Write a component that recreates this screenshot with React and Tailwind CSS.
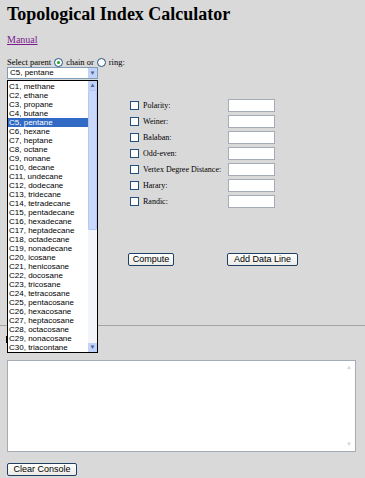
const alkanes = [
  'methane', 'ethane', 'propane', 'butane', 'pentane', 'hexane', 'heptane', 'octane', 'nonane', 'decane',
  'undecane', 'dodecane', 'tridecane', 'tetradecane', 'pentadecane', 'hexadecane', 'heptadecane', 'octadecane', 'nonadecane', 'icosane',
  'henicosane', 'docosane', 'tricosane', 'tetracosane', 'pentacosane', 'hexacosane', 'heptacosane', 'octacosane', 'nonacosane', 'triacontane'
];

const indices = ['Polarity:', 'Weiner:', 'Balaban:', 'Odd-even:', 'Vertex Degree Distance:', 'Harary:', 'Randic:'];

const sans = "font-['Liberation_Sans',Arial,sans-serif]";

const Button = ({ children, className }) => (
  <button
    className={`${sans} h-[13px] text-[9px] leading-none text-black bg-gradient-to-b from-white to-[#ecebe6] border border-[#1f3f64] rounded-[2px] ${className}`}
  >
    {children}
  </button>
);

const App = () => {
  return (
    <div className="relative w-full min-h-[478px] bg-[#d9d9d9] font-['Liberation_Serif','Times_New_Roman',serif] text-black">
      <div className="px-[7px] pt-[3px]">
        <h1 className="text-[18px] leading-[22px] font-bold">Topological Index Calculator</h1>
        <a href="#" className="block mt-[9px] w-fit text-[10px] leading-[11px] text-[#7b1a8e] underline">Manual</a>

        <div className="mt-[12px] flex items-center gap-[3px] text-[8.5px] leading-[10px]">
          <span>Select parent</span>
          <span className="w-[9px] h-[9px] rounded-full border border-[#1c5180] bg-white flex items-center justify-center">
            <span className="w-[3px] h-[3px] rounded-full bg-[#21a121]" />
          </span>
          <span>chain or</span>
          <span className="w-[9px] h-[9px] rounded-full border border-[#1c5180] bg-white" />
          <span>ring:</span>
        </div>

        <div className="relative">
          <div className={`${sans} w-[91px] h-[12px] bg-white border border-[#7f9db9] flex items-center text-[8px] leading-none pl-[2px]`}>
            <span className="flex-1">C5, pentane</span>
            <span className="w-[9px] h-[10px] bg-[#c1d3fb] text-[#4d6185] text-[6px] flex items-center justify-center">▼</span>
          </div>

          {/* open list */}
          <div className={`${sans} absolute z-10 left-0 top-[13px] w-[91px] h-[273px] bg-white border border-black flex text-[8px] leading-[9px]`}>
            <div className="flex-1 pt-[1px]">
              {alkanes.map((name, i) => (
                <div key={name} className={`pl-[1px] h-[9px] whitespace-nowrap ${i === 4 ? 'bg-[#316ac5] text-white' : ''}`}>
                  C{i + 1}, {name}
                </div>
              ))}
            </div>
            <div className="w-[9px] bg-[#f3f5fb] flex flex-col">
              <div className="h-[9px] bg-[#c1d3fb] text-[#4d6185] text-[6px] flex items-center justify-center">▲</div>
              <div className="h-[140px] bg-[#c9d8fc] border border-[#b4c8f6] rounded-[1px]" />
              <div className="flex-1" />
              <div className="h-[9px] bg-[#c1d3fb] text-[#4d6185] text-[6px] flex items-center justify-center">▼</div>
            </div>
          </div>
        </div>

        <div className="pl-[121px] pt-[20px]">
          <div className="flex flex-col gap-[3px]">
            {indices.map((label) => (
              <div key={label} className="flex items-center h-[13px]">
                <span className="w-[9px] h-[9px] ml-[2px] border border-[#1c5180] bg-white" />
                <span className="ml-[4px] w-[85px] text-[8px] leading-none whitespace-nowrap">{label}</span>
                <span className="w-[47px] h-[13px] bg-white border border-[#a5acb5]" />
              </div>
            ))}
          </div>

          <div className="mt-[45px] flex">
            <Button className="w-[46px]">Compute</Button>
            <Button className="ml-[53px] w-[71px]">Add Data Line</Button>
          </div>
        </div>
      </div>

      <hr className="mt-[59px] border-0 border-t border-[#a3a3a3]" />

      <div className="px-[7px]">
        <div className="mt-[10px] ml-[-1px] w-[1px] h-[7px] bg-black" />
        <div className="mt-[17px] w-[349px] h-[92px] bg-white border border-[#a5acb5] flex justify-end">
          <div className="w-[9px] flex flex-col justify-between py-[2px] text-[6px] text-[#d6d6d6]">
            <span>▲</span>
            <span>▼</span>
          </div>
        </div>
        <Button className="mt-[11px] w-[70px]">Clear Console</Button>
      </div>
    </div>
  );
};

export default App;
